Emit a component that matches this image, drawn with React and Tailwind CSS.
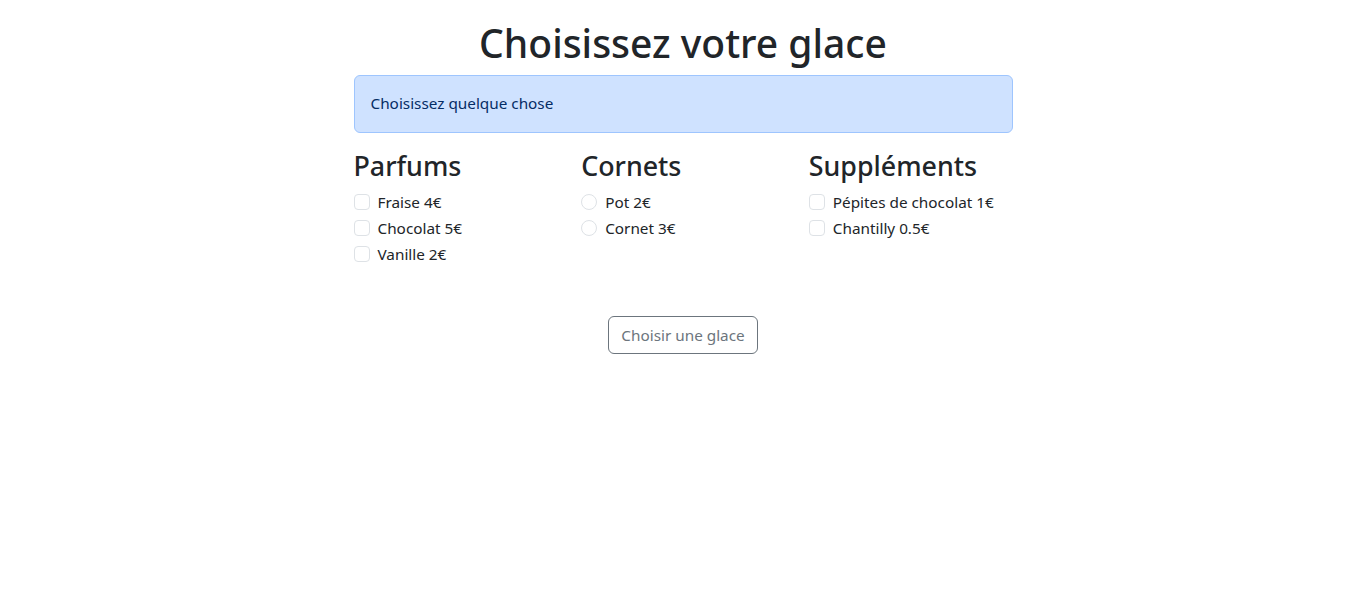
import React from "react";

const font = { fontFamily: '"Noto Sans", sans-serif' };

function Check({ label, radio }) {
  return (
    <div className="flex items-center h-6 mb-[2px]">
      <span
        className={`w-4 h-4 border border-[#dee2e6] bg-white ${radio ? "rounded-full" : "rounded-[4px]"}`}
      />
      <span className="ml-2 text-[15.3px] leading-6 text-[#212529]">{label}</span>
    </div>
  );
}

function Col({ title, items, radio }) {
  return (
    <div className="px-3">
      <h3 className="text-[26.8px] leading-[33.6px] font-medium text-[#212529] mb-[7px]">{title}</h3>
      {items.map((i) => (
        <Check key={i} label={i} radio={radio} />
      ))}
    </div>
  );
}

export default function App() {
  return (
    <div className="min-h-screen bg-white pl-[2px]" style={font}>
      <div className="w-[659px] mx-auto pt-[19px]">
        <h1 className="text-[39px] leading-[48px] font-medium text-center text-[#212529] mb-2">
          Choisissez votre glace
        </h1>
        <div className="bg-[#cfe2ff] border border-[#9ec5fe] rounded-[6px] px-4 pt-[15px] pb-[17px] text-[#052c65] text-[15.3px] leading-6 mb-4">
          Choisissez quelque chose
        </div>
        <div className="grid grid-cols-3 -mx-3">
          <Col title="Parfums" items={["Fraise 4€", "Chocolat 5€", "Vanille 2€"]} />
          <Col title="Cornets" items={["Pot 2€", "Cornet 3€"]} radio />
          <Col title="Suppléments" items={["Pépites de chocolat 1€", "Chantilly 0.5€"]} />
        </div>
        <div className="flex justify-center mt-[48px]">
          <button className="border border-[#6c757d] text-[#6c757d] rounded-[6px] px-3 py-[6px] text-[15.3px] leading-6 bg-white">
            Choisir une glace
          </button>
        </div>
      </div>
    </div>
  );
}
